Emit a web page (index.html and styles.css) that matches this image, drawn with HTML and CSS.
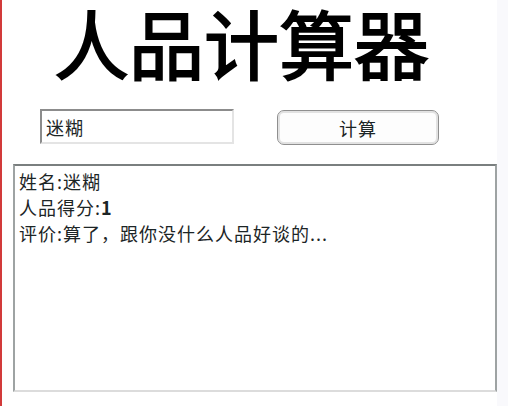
FILE: index.html
```html
<!DOCTYPE html>
<html lang="zh-CN">
<head>
    <meta charset="UTF-8">
    <meta name="viewport" content="width=device-width, initial-scale=1.0">
    <title>人品计算器</title>
    <link rel="stylesheet" href="styles.css">
</head>
<body>
    <div class="page">
        <h1 class="title">人品计算器</h1>
        <div class="form-row">
            <input type="text" id="nameInput" class="name-input" value="迷糊">
            <button class="calc-btn">计算</button>
        </div>
        <div class="result" id="result">
            <div>姓名:迷糊</div>
            <div>人品得分:<b>1</b></div>
            <div>评价:算了，跟你没什么人品好谈的...</div>
        </div>
    </div>
</body>
</html>
```

FILE: styles.css
```css
html {
    background-color: #f9f9fc;
}
body {
    margin: 0;
    padding: 0;
    font-family: "Noto Sans CJK SC", "Liberation Sans", sans-serif;
    color: #1c2526;
}
.page {
    width: 497px;
    min-height: 406px;
    background-color: #fff;
    border-left: 2px solid #d23a3a;
    box-sizing: border-box;
    padding-top: 4px;
}
.title {
    margin: 0 0 0 52px;
    font-size: 75px;
    line-height: 1;
    font-weight: normal;
    color: #000;
    -webkit-text-stroke: 1.8px #000;
}
.form-row {
    display: flex;
    align-items: center;
    margin-top: 29px;
    padding-left: 38px;
    gap: 43px;
}
.name-input {
    width: 194px;
    height: 35px;
    box-sizing: border-box;
    border: 2px solid;
    border-color: #8c8c8c #e4e4e4 #e4e4e4 #8c8c8c;
    padding: 0 4px;
    font-family: inherit;
    font-size: 18px;
    letter-spacing: 1px;
    color: #1c2526;
    outline: none;
}
.calc-btn {
    width: 162px;
    height: 35px;
    box-sizing: border-box;
    border: 1px solid #8f8f8f;
    border-radius: 7px;
    box-shadow: inset 0 0 0 2px #e2e2e2;
    background-color: #fdfdfd;
    font-family: inherit;
    font-size: 18px;
    letter-spacing: 1px;
    color: #1c2526;
    padding: 0;
    margin-top: 2px;
}
.result {
    margin: 19px 0 0 11px;
    width: 484px;
    height: 228px;
    box-sizing: border-box;
    border: 2px solid;
    border-color: #7a7f7f #9ea3a3 #dcdcdc #9ea3a3;
    padding: 2px 4px;
    font-size: 18px;
    letter-spacing: 1px;
    line-height: 26px;
}
.result b {
    font-weight: bold;
}
```
